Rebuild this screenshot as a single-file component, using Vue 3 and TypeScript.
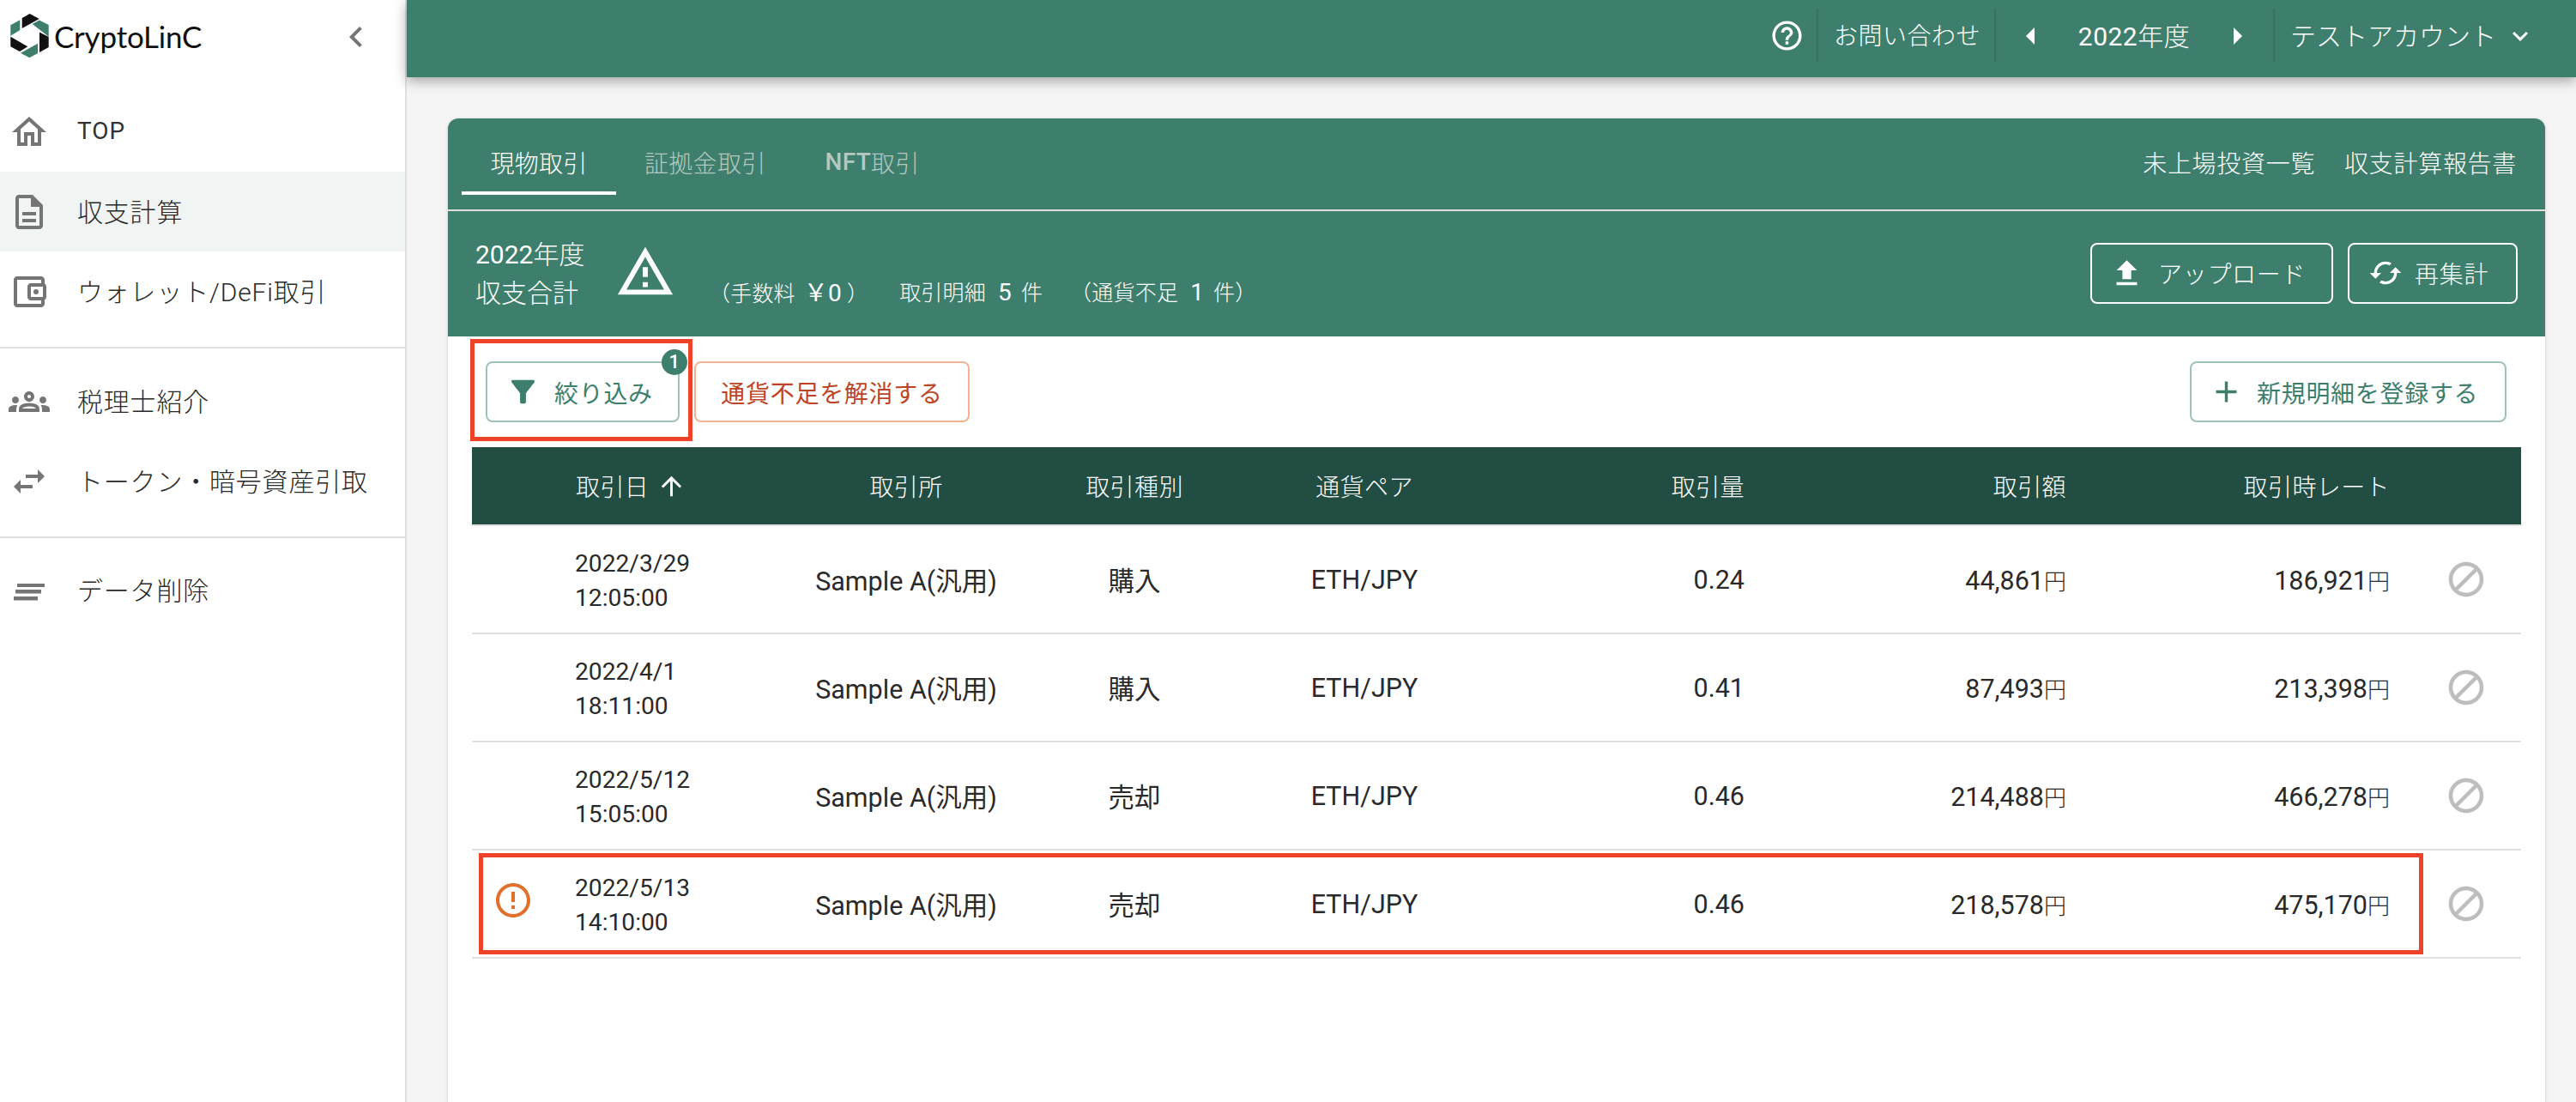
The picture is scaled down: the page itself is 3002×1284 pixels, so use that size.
<script setup lang="ts">
interface Row {
  date: string
  time: string
  kind: string
  qty: string
  amount: string
  rate: string
  alert?: boolean
}

interface NavItem {
  label: string
  icon: string
  active?: boolean
  latin?: boolean
}

const icons: Record<string, string> = {
  home: 'M12 5.69l5 4.5V18h-2v-6H9v6H7v-7.81l5-4.5M12 3L2 12h3v8h6v-6h2v6h6v-8h3L12 3z',
  doc: 'M8 16h8v2H8zm0-4h8v2H8zm6-10H6c-1.1 0-2 .9-2 2v16c0 1.1.89 2 1.99 2H18c1.1 0 2-.9 2-2V8l-6-6zm4 18H6V4h7v5h5v11z',
  wallet: 'M21 7.28V5c0-1.1-.9-2-2-2H5c-1.11 0-2 .9-2 2v14c0 1.1.89 2 2 2h14c1.1 0 2-.9 2-2v-2.28c.59-.35 1-.98 1-1.72V9c0-.74-.41-1.38-1-1.72zM20 9v6h-7V9h7zM5 19V5h14v2h-6c-1.1 0-2 .9-2 2v6c0 1.1.9 2 2 2h6v2H5zM16 13.5a1.5 1.5 0 1 0 0-3 1.5 1.5 0 0 0 0 3z',
  groups: 'M4 13c1.1 0 2-.9 2-2s-.9-2-2-2-2 .9-2 2 .9 2 2 2zm1.13 1.1c-.37-.06-.74-.1-1.13-.1-.99 0-1.93.21-2.78.58C.48 14.9 0 15.62 0 16.43V18h4.5v-1.61c0-.83.23-1.61.63-2.29zM20 13c1.1 0 2-.9 2-2s-.9-2-2-2-2 .9-2 2 .9 2 2 2zm4 3.43c0-.81-.48-1.53-1.22-1.85-.85-.37-1.79-.58-2.78-.58-.39 0-.76.04-1.13.1.4.68.63 1.46.63 2.29V18H24v-1.57zm-7.76-2.78c-1.17-.52-2.61-.9-4.24-.9-1.63 0-3.07.39-4.24.9C6.68 14.13 6 15.21 6 16.39V18h12v-1.61c0-1.18-.68-2.26-1.76-2.74zM8.07 16c.09-.23.13-.39.91-.69.97-.38 1.99-.56 3.02-.56s2.05.18 3.02.56c.77.3.81.46.91.69H8.07zM12 8c.55 0 1 .45 1 1s-.45 1-1 1-1-.45-1-1 .45-1 1-1m0-2c-1.66 0-3 1.34-3 3s1.34 3 3 3 3-1.34 3-3-1.34-3-3-3z',
  swap: 'M6.99 11L3 15l3.99 4v-3H14v-2H6.99v-3zM21 9l-3.99-4v3H10v2h7.01v3L21 9z',
  lines: 'M5 8h16v2H5zM4 11.5h15v2.2H4zM3 15.5h14v2.2H3z'
}

const navTop: NavItem[] = [
  { label: 'TOP', icon: 'home', latin: true },
  { label: '収支計算', icon: 'doc', active: true },
  { label: 'ウォレット/DeFi取引', icon: 'wallet' }
]
const navMid: NavItem[] = [
  { label: '税理士紹介', icon: 'groups' },
  { label: 'トークン・暗号資産引取', icon: 'swap' }
]
const navEnd: NavItem[] = [{ label: 'データ削除', icon: 'lines' }]

const rows: Row[] = [
  { date: '2022/3/29', time: '12:05:00', kind: '購入', qty: '0.24', amount: '44,861', rate: '186,921' },
  { date: '2022/4/1', time: '18:11:00', kind: '購入', qty: '0.41', amount: '87,493', rate: '213,398' },
  { date: '2022/5/12', time: '15:05:00', kind: '売却', qty: '0.46', amount: '214,488', rate: '466,278' },
  { date: '2022/5/13', time: '14:10:00', kind: '売却', qty: '0.46', amount: '218,578', rate: '475,170', alert: true }
]
</script>

<template>
  <div class="app">
    <aside class="side">
      <div class="brand">
        <svg class="logo" viewBox="0 0 70 85" width="70" height="85" aria-hidden="true">
          <polygon fill="#111" points="34.7,16 45.7,22 25.7,33 25.7,21" />
          <polygon fill="#3d7f6c" points="37.7,28 45.7,23.5 56.7,29 56.7,42.7" />
          <polygon fill="#111" points="46,37.5 56.7,43 56.7,55 46,61" />
          <polygon fill="#3d7f6c" points="44,50.7 44,62 34.3,67.3 24,61.7" />
          <polygon fill="#111" points="12.3,42.7 32.3,54.3 23,60 12.3,54.3" />
          <polygon fill="#3d7f6c" points="23.3,23.3 23.3,35 12.3,41.7 12.3,29.3" />
        </svg>
        <span class="wordmark">CryptoLinC</span>
        <svg class="collapse" viewBox="0 0 24 24" width="48" height="48" aria-hidden="true">
          <path d="M15.41 7.41L14 6l-6 6 6 6 1.41-1.41L10.83 12z" />
        </svg>
      </div>

      <nav class="nav nav-a">
        <a v-for="item in navTop" :key="item.label" class="nav-item" :class="{ active: item.active, latin: item.latin }">
          <svg viewBox="0 0 24 24" width="48" height="48" aria-hidden="true"><path :d="icons[item.icon]" /></svg>
          <span>{{ item.label }}</span>
        </a>
      </nav>
      <nav class="nav nav-b">
        <a v-for="item in navMid" :key="item.label" class="nav-item">
          <svg viewBox="0 0 24 24" width="48" height="48" aria-hidden="true"><path :d="icons[item.icon]" /></svg>
          <span>{{ item.label }}</span>
        </a>
      </nav>
      <nav class="nav nav-c">
        <a v-for="item in navEnd" :key="item.label" class="nav-item">
          <svg viewBox="0 0 24 24" width="48" height="48" aria-hidden="true"><path :d="icons[item.icon]" /></svg>
          <span>{{ item.label }}</span>
        </a>
      </nav>
    </aside>

    <div class="main">
      <header class="top">
        <div class="top-cell help">
          <svg viewBox="0 0 24 24" width="41" height="41" aria-hidden="true">
            <path d="M11 18h2v-2h-2v2zm1-16C6.48 2 2 6.48 2 12s4.48 10 10 10 10-4.48 10-10S17.52 2 12 2zm0 18c-4.41 0-8-3.59-8-8s3.59-8 8-8 8 3.59 8 8-3.59 8-8 8zm0-14c-2.21 0-4 1.79-4 4h2c0-1.1.9-2 2-2s2 .9 2 2c0 2-3 1.75-3 5h2c0-2.25 3-2.5 3-5 0-2.21-1.79-4-4-4z" />
          </svg>
        </div>
        <div class="top-cell contact"><span>お問い合わせ</span></div>
        <div class="top-cell year">
          <span class="tri tri-left"></span>
          <span class="lift"><b>2022</b>年度</span>
          <span class="tri tri-right"></span>
        </div>
        <div class="top-cell account">
          <span class="lift">テストアカウント</span>
          <svg viewBox="0 0 24 24" width="36" height="36" aria-hidden="true">
            <path d="M16.59 8.59L12 13.17 7.41 8.59 6 10l6 6 6-6z" />
          </svg>
        </div>
      </header>

      <section class="content">
        <div class="card">
          <div class="tabs">
            <div class="tab-group">
              <a class="tab on">現物取引</a>
              <a class="tab">証拠金取引</a>
              <a class="tab nft"><b>NFT</b>取引</a>
            </div>
            <div class="links">
              <a>未上場投資一覧</a>
              <a>収支計算報告書</a>
            </div>
          </div>

          <div class="summary">
            <div class="title">
              <div><b>2022</b>年度</div>
              <div>収支合計</div>
            </div>
            <svg class="warn" viewBox="0 0 24 24" width="70" height="70" aria-hidden="true">
              <path d="M12 5.99L19.53 19H4.47L12 5.99M12 2L1 21h22L12 2zm1 14h-2v2h2v-2zm0-6h-2v4h2v-4z" />
            </svg>
            <div class="stats">
              <span class="fee">（手数料<b>￥0</b>）</span>
              <span class="count">取引明細<b>5</b>件</span>
              <span class="short">（通貨不足<b>1</b>件）</span>
            </div>
            <div class="actions">
              <button class="ghost up">
                <svg viewBox="0 0 24 24" width="41" height="41" aria-hidden="true"><path d="M9 16h6v-6h4l-7-7-7 7h4zm-4 2h14v2H5z" /></svg>
                <span>アップロード</span>
              </button>
              <button class="ghost re">
                <svg viewBox="0 0 24 24" width="40" height="40" aria-hidden="true"><path d="M19 8l-4 4h3c0 3.31-2.69 6-6 6-1.01 0-1.97-.25-2.8-.7l-1.46 1.46C8.97 19.54 10.43 20 12 20c4.42 0 8-3.58 8-8h3l-4-4zM6 12c0-3.31 2.69-6 6-6 1.01 0 1.97.25 2.8.7l1.46-1.46C15.03 4.46 13.57 4 12 4c-4.42 0-8 3.58-8 8H1l4 4 4-4H6z" /></svg>
                <span>再集計</span>
              </button>
            </div>
          </div>

          <div class="toolbar">
            <div class="tool-left">
              <button class="line filter">
                <svg viewBox="0 0 24 24" width="41" height="41" aria-hidden="true"><path d="M4.25 5.61C6.27 8.2 10 13 10 13v6c0 .55.45 1 1 1h2c.55 0 1-.45 1-1v-6s3.72-4.8 5.74-7.39c.51-.66.04-1.61-.79-1.61H5.04c-.83 0-1.3.95-.79 1.61z" /></svg>
                <span>絞り込み</span>
                <i class="badge">1</i>
                <i class="mark mark-filter"></i>
              </button>
              <button class="line warn-btn">通貨不足を解消する</button>
            </div>
            <button class="line add">
              <svg viewBox="0 0 24 24" width="41" height="41" aria-hidden="true"><path d="M19 13h-6v6h-2v-6H5v-2h6V5h2v6h6v2z" /></svg>
              <span>新規明細を登録する</span>
            </button>
          </div>

          <div class="table">
            <div class="thead grid">
              <div></div>
              <div class="th-date">
                <span>取引日</span>
                <svg viewBox="0 0 24 24" width="35" height="35" aria-hidden="true"><path d="M4 12l1.41 1.41L11 7.83V20h2V7.83l5.58 5.59L20 12l-8-8-8 8z" /></svg>
              </div>
              <div class="c">取引所</div>
              <div class="c">取引種別</div>
              <div class="c">通貨ペア</div>
              <div class="r">取引量</div>
              <div class="r">取引額</div>
              <div class="r">取引時レート</div>
              <div></div>
            </div>
            <div v-for="row in rows" :key="row.date" class="tr grid">
              <div class="alert">
                <svg v-if="row.alert" viewBox="0 0 24 24" width="48" height="48" aria-hidden="true">
                  <path d="M11 15h2v2h-2zm0-8h2v6h-2zm.99-5C6.47 2 2 6.48 2 12s4.47 10 9.99 10C17.52 22 22 17.52 22 12S17.52 2 11.99 2zM12 20c-4.42 0-8-3.58-8-8s3.58-8 8-8 8 3.58 8 8-3.58 8-8 8z" />
                </svg>
              </div>
              <div class="date"><div>{{ row.date }}</div><div>{{ row.time }}</div></div>
              <div class="c">Sample A(汎用)</div>
              <div class="c">{{ row.kind }}</div>
              <div class="c">ETH/JPY</div>
              <div class="r">{{ row.qty }}</div>
              <div class="r">{{ row.amount }}<small>円</small></div>
              <div class="r">{{ row.rate }}<small>円</small></div>
              <div class="ban">
                <svg viewBox="0 0 24 24" width="48" height="48" aria-hidden="true">
                  <path d="M12 2C6.48 2 2 6.48 2 12s4.48 10 10 10 10-4.48 10-10S17.52 2 12 2zM4 12c0-4.42 3.58-8 8-8 1.85 0 3.55.63 4.9 1.69L5.69 16.9C4.63 15.55 4 13.85 4 12zm8 8c-1.85 0-3.55-.63-4.9-1.69L18.31 7.1C19.37 8.45 20 10.15 20 12c0 4.42-3.58 8-8 8z" />
                </svg>
              </div>
              <i v-if="row.alert" class="mark mark-row"></i>
            </div>
          </div>
        </div>
      </section>
    </div>
  </div>
</template>

<style>
html,
body {
  margin: 0;
  height: 1284px;
  overflow: hidden;
  background: #f5f5f5;
}
</style>

<style scoped>
.app {
  display: flex;
  height: 1284px;
  overflow: hidden;
  font-family: Roboto, "Noto Sans CJK JP", sans-serif;
  font-size: 28px;
  color: #333;
  background: #f5f5f5;
}
b {
  font-weight: 400;
}

/* sidebar */
.side {
  flex: 0 0 474px;
  box-sizing: border-box;
  background: #fff;
  border-right: 2px solid #e0e0e0;
}
.brand {
  display: flex;
  align-items: center;
  height: 85px;
  position: relative;
}
.logo {
  flex: none;
  margin-right: -7px;
}
.wordmark {
  font-family: Lato, sans-serif;
  font-size: 35px;
  letter-spacing: -0.2px;
  color: #111;
  position: relative;
  top: -1px;
}
.collapse {
  margin-left: auto;
  margin-right: 33px;
  fill: #757575;
}
.nav {
  border-bottom: 2px solid #e0e0e0;
}
.nav-a {
  padding: 22px 0 18px;
}
.nav-b {
  padding: 15px 0 18px;
}
.nav-c {
  padding: 14px 0 0;
  border-bottom: 0;
}
.nav-item {
  display: flex;
  align-items: center;
  height: 93px;
  padding-left: 10px;
  font-size: 30px;
  letter-spacing: 0.8px;
  color: #2a2a2a;
  font-weight: 300;
}
.nav-item span {
  padding-bottom: 3px;
}
.nav-item.latin {
  font-size: 28px;
  letter-spacing: 1px;
  font-weight: 400;
  color: #333;
}
.nav-item svg {
  flex: none;
  margin-right: 32px;
  fill: #757575;
}
.nav-item.active {
  background: #f0f4f3;
}

/* top bar */
.main {
  flex: 1;
  min-width: 0;
  display: flex;
  flex-direction: column;
}
.top {
  flex: none;
  height: 90px;
  box-sizing: border-box;
  padding: 10px 0 17px;
  display: flex;
  justify-content: flex-end;
  align-items: stretch;
  background: #3d7f6c;
  color: #fff;
  box-shadow: 0 4px 14px rgba(0, 0, 0, 0.35);
  font-weight: 300;
  position: relative;
  z-index: 1;
}
.top-cell {
  display: flex;
  align-items: center;
  box-sizing: border-box;
  letter-spacing: 0.5px;
  border-right: 2px solid #37725f;
}
.help {
  padding-right: 14px;
  fill: #fff;
}
.contact {
  width: 207px;
  padding-left: 18px;
}
.contact span,
.lift {
  padding-bottom: 3px;
}
.year {
  width: 325px;
  justify-content: space-between;
  padding: 0 36px 0 35px;
  font-size: 30px;
}
.account {
  width: 351px;
  border-right: 0;
  padding-left: 18px;
  position: relative;
  font-size: 30px;
  letter-spacing: 0;
}
.account svg {
  position: absolute;
  right: 47px;
  top: 14px;
  fill: #fff;
}
.tri {
  width: 0;
  height: 0;
  border-top: 10px solid transparent;
  border-bottom: 10px solid transparent;
}
.tri-left {
  border-right: 10px solid #fff;
}
.tri-right {
  border-left: 10px solid #fff;
}

/* card */
.content {
  flex: 1;
  min-height: 0;
  padding: 48px 36px 0 48px;
}
.card {
  height: 100%;
  background: #fff;
  border-radius: 12px 12px 0 0;
  box-shadow: 0 1px 4px rgba(0, 0, 0, 0.18);
}
.tabs {
  height: 106px;
  box-sizing: border-box;
  display: flex;
  justify-content: space-between;
  background: #3d7f6c;
  border-radius: 12px 12px 0 0;
  padding: 0 33px 0 16px;
  color: #fff;
  font-weight: 300;
}
.tab-group {
  display: flex;
}
.tab {
  height: 89px;
  display: flex;
  align-items: center;
  padding: 12px 33px 0;
  box-sizing: border-box;
  color: #b4c8c1;
  letter-spacing: 0.3px;
}
.tab.on {
  color: #fff;
  border-bottom: 4px solid #fff;
  width: 180px;
  justify-content: center;
  padding: 16px 0 0;
}
.nft {
  padding-left: 36px;
}
.nft b {
  font-weight: 500;
}
.links {
  display: flex;
  align-items: center;
  gap: 34px;
  height: 102px;
  letter-spacing: 0.7px;
}

.summary {
  height: 148px;
  box-sizing: border-box;
  border-top: 2px solid #e0e0e0;
  background: #3d7f6c;
  color: #fff;
  display: flex;
  align-items: center;
  padding: 0 32px;
  font-weight: 300;
}
.title {
  line-height: 45px;
  width: 163px;
  font-size: 30px;
  flex: none;
}
.warn {
  flex: none;
  fill: #fff;
  margin-top: -4px;
}
.stats {
  display: flex;
  align-items: center;
  font-size: 25px;
  margin: 40px 0 0 39px;
  letter-spacing: 0.2px;
}
.stats b {
  font-size: 28px;
  margin: 0 11px 0 14px;
}
.stats .fee b {
  margin: 0 6px 0 10px;
}
.count {
  margin-left: 36px;
}
.short {
  margin-left: 32px;
}
.actions {
  margin-left: auto;
  display: flex;
  gap: 17px;
  margin-top: -2px;
}
button {
  font: inherit;
  background: none;
  cursor: pointer;
  box-sizing: border-box;
  height: 71px;
  border-radius: 8px;
  display: flex;
  align-items: center;
  justify-content: flex-start;
  position: relative;
  font-weight: 300;
  letter-spacing: 0.7px;
  padding: 0 0 0 20px;
}
.ghost {
  border: 2px solid #fff;
  color: #fff;
  fill: #fff;
}
.up {
  width: 283px;
}
.up svg {
  margin-right: 16px;
}
.re {
  width: 198px;
  padding-left: 22px;
}
.re svg {
  margin-right: 14px;
}
.toolbar {
  height: 129px;
  box-sizing: border-box;
  padding: 0 45px 0 44px;
  display: flex;
  justify-content: space-between;
  align-items: center;
}
.tool-left {
  display: flex;
  gap: 17px;
}
.line {
  border: 2px solid #9dc4b6;
  color: #3d7f6c;
  fill: #3d7f6c;
  font-weight: 400;
}
.filter {
  width: 226px;
  padding-left: 21px;
}
.filter svg {
  margin-right: 16px;
}
.warn-btn {
  width: 321px;
  border-color: #f1b492;
  color: #bd4426;
  justify-content: center;
  padding: 0;
}
.add {
  width: 369px;
}
.add svg {
  margin-right: 15px;
}
.badge {
  position: absolute;
  right: -11px;
  top: -16px;
  width: 30px;
  height: 30px;
  border-radius: 50%;
  background: #3d7f6c;
  color: #fff;
  font-size: 22px;
  font-style: normal;
  font-weight: 500;
  line-height: 30px;
  text-align: center;
}
.mark {
  position: absolute;
  box-sizing: border-box;
  border: 5px solid #ee4328;
  pointer-events: none;
}
.mark-filter {
  left: -20px;
  top: -28px;
  width: 259px;
  height: 119px;
}
.mark-row {
  left: 8px;
  top: 3px;
  width: 2266px;
  height: 118px;
}

/* table */
.table {
  margin: 0 28px;
}
.grid {
  display: grid;
  grid-template-columns: 104px 276px 252px 280px 256px 330px 375px 377px 138px;
  align-items: center;
}
.thead {
  height: 92px;
  box-sizing: border-box;
  background: #214d42;
  color: #fff;
  font-weight: 300;
  letter-spacing: 0.4px;
  border-bottom: 2px solid #e0e0e0;
}
.th-date {
  display: flex;
  align-items: center;
  padding-left: 17px;
  gap: 9px;
  fill: #fff;
}
.c {
  text-align: center;
}
.r {
  text-align: right;
  padding-right: 15px;
}
.tr {
  height: 126px;
  box-sizing: border-box;
  border-bottom: 2px solid #e0e0e0;
  color: #2a2a2a;
  font-size: 30.5px;
  position: relative;
}
.alert {
  padding-left: 24px;
  height: 48px;
  fill: #e0702c;
  margin-bottom: 8px;
}
.date {
  padding: 3px 0 0 16px;
  line-height: 40px;
  font-size: 28.2px;
}
small {
  font-size: 26px;
  font-weight: 300;
}
.ban {
  height: 48px;
  padding-left: 50px;
  fill: #bdbdbd;
  stroke: #bdbdbd;
  stroke-width: 0.3px;
}
</style>
